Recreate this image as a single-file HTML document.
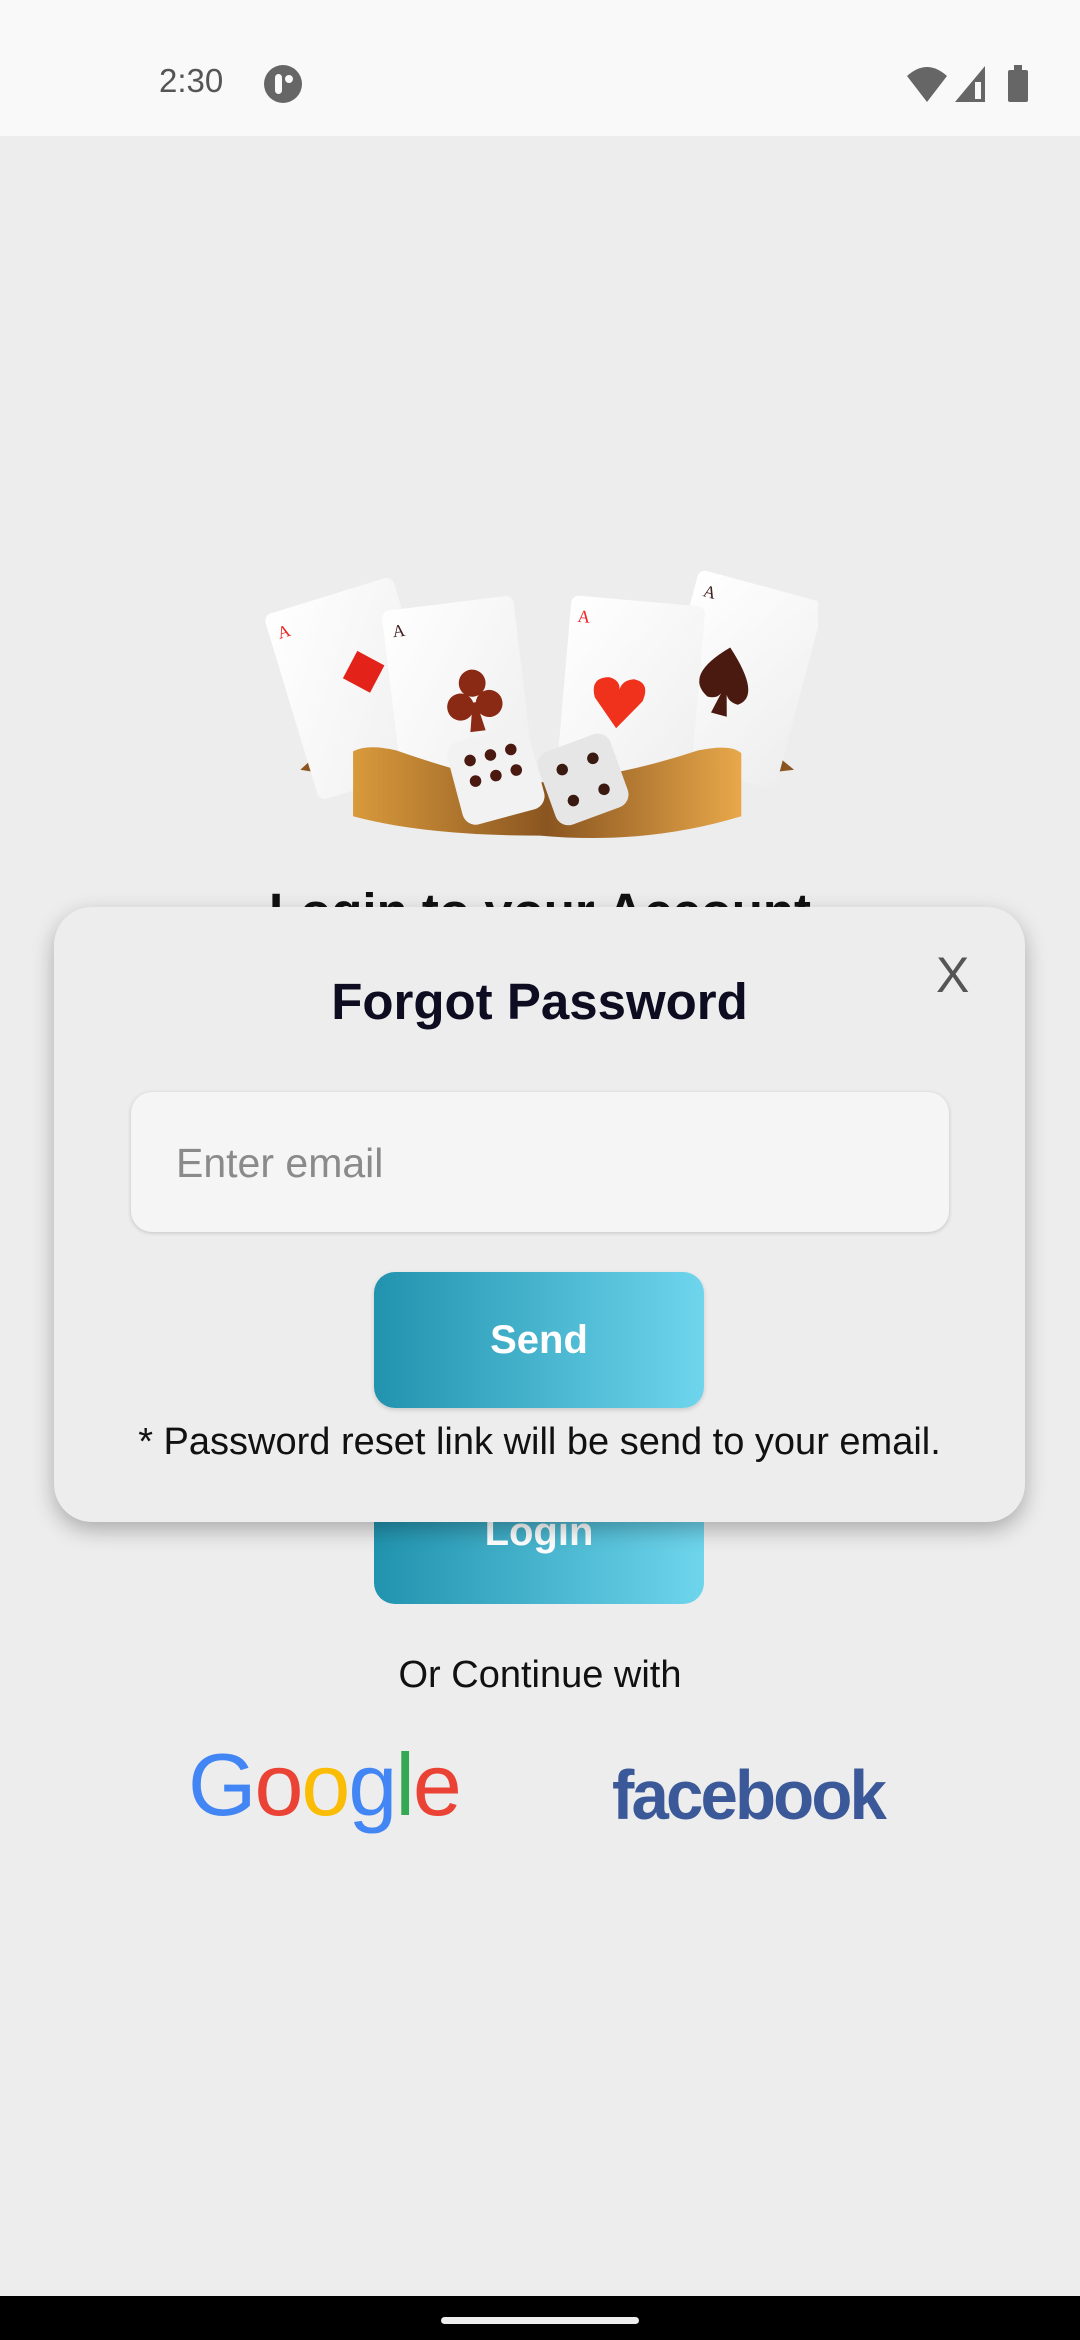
<!DOCTYPE html>
<html><head><meta charset="utf-8"><style>
*{margin:0;padding:0;box-sizing:border-box}
body{width:1080px;height:2340px;background:#ededed;font-family:"Liberation Sans",sans-serif;position:relative;overflow:hidden}
.abs{position:absolute}
.status{left:0;top:0;width:1080px;height:136px;background:#f9f9f9}
.btn{background:linear-gradient(90deg,#2193ae,#6ed5ed);border-radius:21px;color:#fff;font-weight:bold;text-align:center}
</style></head><body>
<div class="abs status"></div>
<div class="abs" style="left:159px;top:62px;font-size:33px;color:#555">2:30</div>
<svg class="abs" style="left:263px;top:64px" width="40" height="40" viewBox="0 0 40 40"><ellipse cx="20" cy="20" rx="19" ry="19" fill="#666"/><rect x="12" y="10" width="7" height="20" rx="3.5" fill="#f9f9f9"/><circle cx="26" cy="15" r="4" fill="#f9f9f9"/></svg>
<svg class="abs" style="left:905px;top:64px" width="130" height="40" viewBox="0 0 130 40"><path d="M2 12 Q22 -6 42 12 L22 38 Z" fill="#666"/><path d="M50 38 L80 2 L80 38 Z" fill="#666"/><rect x="70" y="18" width="6" height="17" fill="#f9f9f9"/><rect x="103" y="6" width="20" height="32" rx="2" fill="#666"/><rect x="109" y="1" width="8" height="6" fill="#666"/></svg>

<svg class="abs" style="left:262px;top:545px" width="556" height="310" viewBox="0 0 580 320" preserveAspectRatio="none">
<defs><linearGradient id="rb" x1="0" x2="1"><stop offset="0" stop-color="#d99a3c"/><stop offset=".5" stop-color="#8a5520"/><stop offset="1" stop-color="#e8a84a"/></linearGradient>
<linearGradient id="cd" x1="0" y1="0" x2="1" y2="1"><stop offset="0" stop-color="#fff"/><stop offset="1" stop-color="#eee"/></linearGradient></defs>
<path d="M40 180 L95 205 L90 240 L40 232 L62 212 Z" fill="#8a5520"/>
<path d="M545 178 L480 205 L485 240 L555 232 L528 210 Z" fill="#8a5520"/>
<g transform="rotate(-17 90 140)"><rect x="25" y="50" width="140" height="200" rx="8" fill="url(#cd)"/><text x="34" y="78" font-size="18" fill="#e22" font-family="Liberation Serif">A</text><rect x="92" y="120" width="32" height="32" fill="#e3221a" transform="rotate(45 108 136)"/></g>
<g transform="rotate(15 500 140)"><rect x="428" y="40" width="135" height="200" rx="8" fill="url(#cd)"/><text x="438" y="66" font-size="18" fill="#422" font-family="Liberation Serif">A</text><path d="M480 110 Q440 150 470 165 Q480 165 483 158 L478 180 L495 180 L489 158 Q493 165 503 165 Q525 150 480 110Z" fill="#4a1a10"/></g>
<g transform="rotate(-7 200 150)"><rect x="135" y="60" width="138" height="205" rx="8" fill="url(#cd)"/><text x="144" y="88" font-size="18" fill="#422" font-family="Liberation Serif">A</text><circle cx="220" cy="145" r="14" fill="#8a2a15"/><circle cx="205" cy="168" r="14" fill="#8a2a15"/><circle cx="235" cy="168" r="14" fill="#8a2a15"/><path d="M218 165 L212 195 L228 195 L222 165Z" fill="#8a2a15"/></g>
<g transform="rotate(5 380 160)"><rect x="314" y="57" width="140" height="205" rx="8" fill="url(#cd)"/><text x="322" y="84" font-size="18" fill="#e22" font-family="Liberation Serif">A</text><path d="M372 190 L347 160 Q340 140 360 138 Q372 140 372 150 Q374 140 386 138 Q404 140 397 160 Z" fill="#f0321c"/></g>
<path d="M95 213 Q110 205 140 212 Q250 250 290 245 Q370 240 455 212 Q490 205 500 215 L500 280 Q400 310 290 300 Q170 300 95 280 Z" fill="url(#rb)"/>
<g transform="rotate(-15 244 238)"><rect x="200" y="194" width="88" height="88" rx="14" fill="#f2f2f2"/><g fill="#4a1a10"><circle cx="222" cy="216" r="6"/><circle cx="244" cy="216" r="6"/><circle cx="266" cy="216" r="6"/><circle cx="222" cy="238" r="6"/><circle cx="244" cy="238" r="6"/><circle cx="266" cy="238" r="6"/></g></g>
<g transform="rotate(-20 335 242)"><rect x="295" y="202" width="80" height="80" rx="14" fill="#e6e6e6"/><g fill="#3a1a10"><circle cx="318" cy="225" r="6"/><circle cx="352" cy="225" r="6"/><circle cx="318" cy="259" r="6"/><circle cx="352" cy="259" r="6"/></g></g>
</svg>

<div class="abs" style="left:0;width:1080px;top:882px;text-align:center;font-size:51px;font-weight:bold;color:#111">Login to your Account</div>

<div class="abs btn" style="left:374px;top:1468px;width:330px;height:136px;font-size:40px;line-height:136px"><span style="position:relative;top:-4px">Login</span></div>
<div class="abs" style="left:0;width:1080px;top:1654px;text-align:center;font-size:38px;color:#111">Or Continue with</div>
<div class="abs" style="left:188px;top:1734px;font-size:88px;letter-spacing:-2px"><span style="color:#4285f4">G</span><span style="color:#ea4335">o</span><span style="color:#fbbc05">o</span><span style="color:#4285f4">g</span><span style="color:#34a853">l</span><span style="color:#ea4335">e</span></div>
<div class="abs" style="left:612px;top:1755px;font-size:70px;font-weight:bold;color:#3b5998;letter-spacing:-3px;transform:scaleX(.96);transform-origin:left">facebook</div>

<div class="abs" style="left:54px;top:907px;width:971px;height:615px;background:#ededed;border-radius:38px;box-shadow:0 8px 22px rgba(0,0,0,.28)"></div>
<div class="abs" style="left:54px;width:971px;top:972px;text-align:center;font-size:51px;font-weight:bold;color:#0e0c20">Forgot Password</div>
<div class="abs" style="left:936px;top:946px;font-size:50px;color:#555">X</div>
<div class="abs" style="left:131px;top:1092px;width:818px;height:140px;background:#f5f5f5;border-radius:21px;box-shadow:0 1px 4px rgba(0,0,0,.18)"></div>
<div class="abs" style="left:176px;top:1140px;font-size:41px;color:#8a8a8a">Enter email</div>
<div class="abs btn" style="left:374px;top:1272px;width:330px;height:136px;font-size:40px;line-height:136px;box-shadow:0 2px 5px rgba(0,0,0,.15)">Send</div>
<div class="abs" style="left:54px;width:971px;top:1421px;text-align:center;font-size:38px;color:#111;white-space:nowrap">* Password reset link will be send to your email.</div>

<div class="abs" style="left:0;top:2296px;width:1080px;height:44px;background:#000"></div>
<div class="abs" style="left:441px;top:2317px;width:198px;height:7px;border-radius:4px;background:#eee"></div>
</body></html>
